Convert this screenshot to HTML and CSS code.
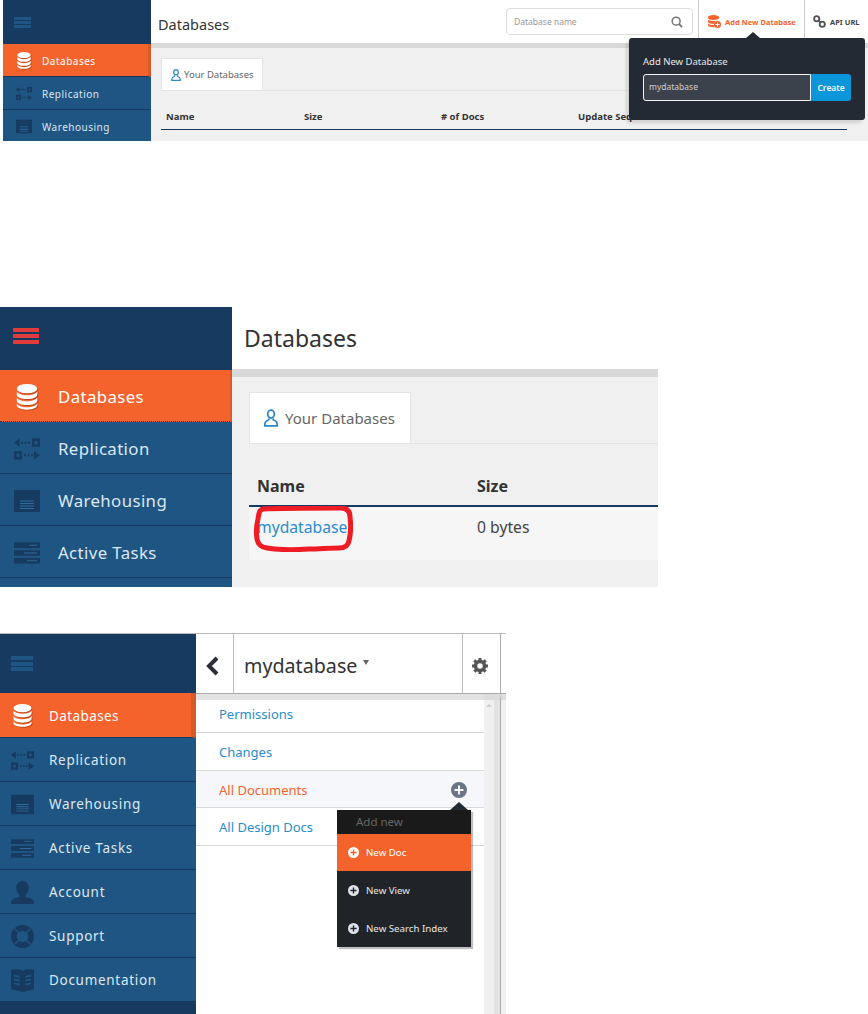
FILE: index.html
```html
<!DOCTYPE html>
<html lang="en">
<head>
<meta charset="utf-8">
<title>Databases</title>
<link rel="stylesheet" href="styles.css">
</head>
<body>
<svg class="defs" width="0" height="0">
  <defs>
    <symbol id="i-db" viewBox="0 0 24 28">
      <ellipse cx="12" cy="5" rx="11" ry="5" fill="currentColor"/>
      <path fill="currentColor" d="M1 8c1.500 2.800 6 4 11 4s9.500-1.200 11-4v3.500c0 2.700-5 4.700-11 4.700S1 14.200 1 11.500zM1 14.500c1.500 2.800 6 4 11 4s9.500-1.200 11-4V18c0 2.700-5 4.700-11 4.700S1 20.700 1 18zM1 21c1.500 2.800 6 4 11 4s9.500-1.200 11-4v2c0 2.700-5 4.700-11 4.700S1 25.700 1 23z"/>
    </symbol>
    <symbol id="i-rep" viewBox="0 0 26 21">
      <path fill="currentColor" d="M0 4.200L5.500 0v8.300zM7 3.200h2v2H7zM10.500 3.200h2v2h-2zM14 3.200h2v2h-2zM18 0h8v8.300h-8zM0 12.700h8V21H0zM10 15.800h2v2h-2zM13.500 15.800h2v2h-2zM17 15.800h2v2h-2zM20 12.700l6 4.200-6 4.100z"/>
      <path fill="#1f5583" d="M20.500 2.500h3v3.300h-3zM2.500 15.200h3v3.300h-3z"/>
    </symbol>
    <symbol id="i-ware" viewBox="0 0 26 22">
      <path fill="currentColor" d="M0 0h26v22H0z"/>
      <path fill="#2f6a9c" d="M6 10.500h14v1H6zM6 13h14v1H6zM6 15.500h14v1H6zM6 18h14v1H6z"/>
    </symbol>
    <symbol id="i-tasks" viewBox="0 0 26 21">
      <path fill="currentColor" d="M0 0h26v5.500H0zM0 7.700h26v5.500H0zM0 15.500h26V21H0z"/>
      <path fill="#2f6a9c" d="M15 2.200h8v1h-8zM10 10h13v1H10zM13 17.700h10v1H13z"/>
    </symbol>
    <symbol id="i-user" viewBox="0 0 24 24">
      <path fill="currentColor" d="M12 0c4 0 6.500 3 6.500 7s-2.300 7-3.500 8v1.500c3 1.200 9 2 9 6V24H0v-1.500c0-4 6-4.800 9-6V15c-1.200-1-3.500-4-3.500-8s2.500-7 6.500-7z"/>
    </symbol>
    <symbol id="i-user-o" viewBox="0 0 16 20">
      <ellipse cx="8" cy="5.500" rx="3.800" ry="4.500" fill="none" stroke="currentColor" stroke-width="2"/>
      <path fill="none" stroke="currentColor" stroke-width="2" d="M5.500 10.500v1.500C3 13 1 14.500 1 17v2h14v-2c0-2.500-2-4-4.500-5v-1.500"/>
    </symbol>
    <symbol id="i-support" viewBox="0 0 24 24">
      <path fill="currentColor" fill-rule="evenodd" d="M12 0a12 12 0 1 1 0 24 12 12 0 0 1 0-24zm0 6a6 6 0 1 0 0 12 6 6 0 0 0 0-12z"/>
      <path fill="none" stroke="#1f5583" stroke-width="1.500" d="M4 4l4.500 4.500M20 4l-4.500 4.500M4 20l4.500-4.500M20 20l-4.500-4.500"/>
    </symbol>
    <symbol id="i-book" viewBox="0 0 24 24">
      <path fill="currentColor" fill-rule="evenodd" d="M0 1c4-1 9-1 12 1 3-2 8-2 12-1v20l-12 3L0 21zM3 6v2l6 1V7zM3 10v2l6 1v-2zM3 14v2l6 1v-2zM21 6l-6 1v2l6-1zM21 10l-6 1v2l6-1zM21 14l-6 1v2l6-1z"/>
    </symbol>
    <symbol id="i-plus" viewBox="0 0 16 16">
      <path fill="currentColor" d="M8 0a8 8 0 1 1 0 16A8 8 0 0 1 8 0zM7 3.500V7H3.500v2H7v3.500h2V9h3.500V7H9V3.500z"/>
    </symbol>
  </defs>
</svg>

<section class="panel panel-one">
  <nav class="side">
    <div class="side-head"><span class="burger"><i></i><i></i><i></i></span></div>
    <a class="side-item active"><svg class="side-icon"><use href="#i-db"/></svg>Databases</a>
    <a class="side-item"><svg class="side-icon"><use href="#i-rep"/></svg>Replication</a>
    <a class="side-item"><svg class="side-icon"><use href="#i-ware"/></svg>Warehousing</a>
  </nav>
  <div class="main">
    <header class="top">
      <h1 class="title">Databases</h1>
      <div class="search"><span>Database name</span>
        <svg class="search-icon" viewBox="0 0 14 14"><circle cx="6" cy="6" r="4.600" fill="none" stroke="currentColor" stroke-width="1.800"/><path d="M9.200 9.200L13 13" stroke="currentColor" stroke-width="2.200"/></svg>
      </div>
      <a class="top-action add">
        <svg class="add-icon" viewBox="0 0 13 13"><path fill="currentColor" d="M0 2c0-1 2.500-2 5.500-2S11 1 11 2v1c0 1-2.500 2-5.500 2S0 4 0 3zM0 4.500C1 5.500 3 6 5.500 6c1 0 2 0 3-.3A3.800 3.800 0 0 0 5.800 9C3 9 1 8.300 0 7.300zM0 8.500c1 1 3 1.500 5.800 1.500.1.800.4 1.500.9 2.200-.4.100-.8.100-1.200.100-3 0-5.500-1-5.500-2z"/><circle cx="9.500" cy="9.500" r="3.500" fill="currentColor"/><path d="M9.500 7.500v4M7.500 9.500h4" stroke="#fff" stroke-width="1"/></svg>
        Add New Database</a>
      <a class="top-action api">
        <svg class="api-icon" viewBox="0 0 14 14"><circle cx="4" cy="4" r="2.800" fill="none" stroke="currentColor" stroke-width="2"/><circle cx="10" cy="10" r="2.800" fill="none" stroke="currentColor" stroke-width="2"/><path d="M5.500 5.500l3 3" stroke="currentColor" stroke-width="2"/></svg>API URL</a>
    </header>
    <div class="band"></div>
    <div class="body">
      <div class="tabs"><div class="tab"><svg class="tab-icon"><use href="#i-user-o"/></svg>Your Databases</div></div>
      <div class="thead">
        <span class="col-a">Name</span><span class="col-b">Size</span><span class="col-c"># of Docs</span><span>Update Seq</span>
      </div>
    </div>
  </div>
  <div class="popover">
    <label class="pop-label">Add New Database</label>
    <div class="pop-row"><span class="pop-input">mydatabase</span><span class="pop-btn">Create</span></div>
  </div>
</section>

<section class="panel panel-two">
  <nav class="side">
    <div class="side-head"><span class="burger"><i></i><i></i><i></i></span></div>
    <a class="side-item active"><svg class="side-icon"><use href="#i-db"/></svg>Databases</a>
    <a class="side-item"><svg class="side-icon"><use href="#i-rep"/></svg>Replication</a>
    <a class="side-item"><svg class="side-icon"><use href="#i-ware"/></svg>Warehousing</a>
    <a class="side-item"><svg class="side-icon"><use href="#i-tasks"/></svg>Active Tasks</a>
    <a class="side-item"></a>
  </nav>
  <div class="main">
    <header class="top"><h1 class="title">Databases</h1></header>
    <div class="band"></div>
    <div class="body">
      <div class="tabs"><div class="tab"><svg class="tab-icon"><use href="#i-user-o"/></svg>Your Databases</div></div>
      <div class="thead"><span class="col-a">Name</span><span>Size</span></div>
      <div class="trow"><a class="col-a link">mydatabase</a><span>0 bytes</span></div>
    </div>
  </div>
  <svg class="ring" viewBox="0 0 100 46"><path fill="none" stroke="#ee1c25" stroke-width="5" stroke-linejoin="round" d="M10 3C30 2 65 2 88 2c6 0 9 3 9 9 1 8 1 16-1 24-1 5-5 7-10 7-10 0-20 1-30 1-15 1-30 1-42-1-6-1-9-3-10-9-1-6-1-12 1-20C6 7 6 4 10 3z"/></svg>
</section>

<section class="panel panel-three">
  <nav class="side">
    <div class="side-head"><span class="burger"><i></i><i></i><i></i></span></div>
    <a class="side-item active"><svg class="side-icon"><use href="#i-db"/></svg>Databases</a>
    <a class="side-item"><svg class="side-icon"><use href="#i-rep"/></svg>Replication</a>
    <a class="side-item"><svg class="side-icon"><use href="#i-ware"/></svg>Warehousing</a>
    <a class="side-item"><svg class="side-icon"><use href="#i-tasks"/></svg>Active Tasks</a>
    <a class="side-item"><svg class="side-icon"><use href="#i-user"/></svg>Account</a>
    <a class="side-item"><svg class="side-icon"><use href="#i-support"/></svg>Support</a>
    <a class="side-item"><svg class="side-icon"><use href="#i-book"/></svg>Documentation</a>
  </nav>
  <div class="main">
    <header class="db-top">
      <span class="back"><svg viewBox="0 0 14 20" class="back-icon"><path d="M11 2L3 10l8 8" fill="none" stroke="currentColor" stroke-width="4"/></svg></span>
      <span class="db-name">mydatabase<i class="caret"></i></span>
      <span class="gear">
        <svg viewBox="0 0 16 16" class="gear-icon"><circle cx="8" cy="8" r="4.500" fill="none" stroke="currentColor" stroke-width="3.500"/><path stroke="currentColor" stroke-width="3" d="M8 0v16M0 8h16M2.300 2.300l11.400 11.400M13.700 2.300L2.300 13.700" stroke-dasharray="3 10"/></svg>
      </span>
    </header>
    <div class="db-wrap">
      <div class="db-list">
        <div class="band"></div>
        <a class="db-link first">Permissions</a>
        <a class="db-link">Changes</a>
        <a class="db-link current">All Documents<svg class="plus"><use href="#i-plus"/></svg></a>
        <a class="db-link">All Design Docs</a>
      </div>
      <div class="scroll"><span class="scroll-up"></span></div>
      <div class="edge"></div>
    </div>
  </div>
  <div class="menu">
    <div class="menu-head">Add new</div>
    <a class="menu-item on"><svg class="menu-icon"><use href="#i-plus"/></svg>New Doc</a>
    <a class="menu-item"><svg class="menu-icon"><use href="#i-plus"/></svg>New View</a>
    <a class="menu-item"><svg class="menu-icon"><use href="#i-plus"/></svg>New Search Index</a>
  </div>
</section>
</body>
</html>
```

FILE: styles.css
```css
* { box-sizing: border-box; }
html, body { margin: 0; padding: 0; background: #fff; }
body { width: 868px; height: 1014px; overflow: hidden; font-family: "Noto Sans", "Open Sans", sans-serif; color: #333; }
.defs { position: absolute; }
.panel { position: relative; display: flex; overflow: visible; }
.side { display: flex; flex-direction: column; background: #173a60; flex: none; overflow: hidden; }
.side-head { display: flex; align-items: center; flex: none; }
.burger { display: flex; flex-direction: column; }
.burger i { display: block; background: #1f5583; }
.side-item { display: flex; align-items: center; flex: none; background: #1f5583; color: #dce8f2; border-bottom: 1px solid #173a60; letter-spacing: .4px; }
.side-item.active { background: #f5632c; color: #fff; border-right-style: solid; border-right-color: #d75a2b; border-bottom-color: #173a60; }
.side-icon { flex: none; color: #173a60; }
.side-item.active .side-icon { color: #fff; filter: drop-shadow(1px 1px 0 rgba(120,50,10,.45)); }
.main { flex: 1; min-width: 0; display: flex; flex-direction: column; }
.top { display: flex; align-items: center; background: #fff; flex: none; }
.title { margin: 0; font-weight: 400; color: #333; flex: 1; }
.band { background: #d9d9d9; flex: none; }
.body { flex: 1; background: #f0f0f0; display: flex; flex-direction: column; }
.tabs { border-bottom: 1px solid #e4e4e4; display: flex; }
.tab { display: flex; align-items: center; background: #fff; color: #666; border: 1px solid #e4e4e4; border-bottom: 0; }
.tab-icon { color: #2b86c5; flex: none; }
.thead { display: flex; font-weight: 700; color: #333; }
.link { color: #2b8ccd; }

/* first panel */
.panel-one { height: 141px; margin-left: 3px; margin-bottom: 166px; width: 865px; }
.panel-one .side { width: 148px; }
.panel-one .side-head { height: 44px; padding-left: 11px; }
.panel-one .burger { gap: 1px; }
.panel-one .burger i { width: 17px; height: 3px; }
.panel-one .side-item { height: 33px; font-size: 10px; letter-spacing: .5px; padding-top: 1px; }
.panel-one .side-icon { width: 16px; height: 17px; margin: 0 10px 0 13px; }
.panel-one .side-item.active { border-right-width: 3px; }
.panel-one .top { height: 43px; padding-left: 7px; }
.panel-one .title { font-size: 14.500px; padding-top: 4px; }
.panel-one .band { height: 5px; }
.panel-one .body { padding: 10px 21px 0 10px; }
.panel-one .tabs { height: 33px; }
.panel-one .tab { width: 102px; font-size: 9.500px; padding-left: 9px; }
.panel-one .tab-icon { width: 10px; height: 12px; margin-right: 3px; }
.panel-one .thead { height: 39px; padding: 19px 0 0 5px; font-size: 9.500px; border-bottom: 1px solid #173a60; }
.panel-one .col-a { width: 138px; }
.panel-one .col-b { width: 137px; }
.panel-one .col-c { width: 137px; }
.search { width: 187px; height: 27px; margin-right: 5px; display: flex; align-items: center; justify-content: space-between; padding: 0 9px 0 7px; border: 1px solid #ddd; border-radius: 4px; font-size: 8.500px; color: #999; }
.search-icon { width: 12px; height: 12px; color: #777; }
.top-action { display: flex; align-items: center; height: 43px; border-left: 1px solid #ccc; flex: none; font-size: 7.500px; font-weight: 700; white-space: nowrap; }
.add { width: 106px; padding-left: 9px; color: #f5632c; }
.add-icon { width: 13px; height: 13px; margin-right: 4px; color: #f5632c; }
.api { width: 64px; padding-left: 8px; color: #444; }
.api-icon { width: 13px; height: 13px; margin-right: 4px; color: #555; }
.popover { position: absolute; left: 626px; top: 38px; width: 236px; height: 82px; background: #242a33; border-radius: 3px; padding: 17px 14px 0; box-shadow: -3px 3px 3px rgba(0,0,0,.12); }
.popover::before { content: ""; position: absolute; left: 117px; top: -6px; border: 7px solid transparent; border-top: 0; border-bottom: 6px solid #242a33; }
.pop-label { display: block; color: #e8e8e8; font-size: 9.500px; line-height: 13px; margin-bottom: 6px; }
.pop-row { display: flex; height: 27px; }
.pop-input { width: 169px; background: #3c424b; border: 1px solid #f4f4f4; border-radius: 3px 0 0 3px; color: #d0d0d0; font-size: 8.500px; padding-left: 5px; line-height: 24px; }
.pop-btn { width: 40px; background: #0a96d8; border-radius: 0 3px 3px 0; color: #f0f8fc; font-size: 8.500px; font-weight: 600; text-align: center; line-height: 27px; }

/* second panel */
.panel-two { height: 280px; width: 658px; margin-bottom: 46px; }
.panel-two .side { width: 232px; }
.panel-two .side-head { height: 63px; padding: 0 0 5px 13px; }
.panel-two .burger { gap: 2px; }
.panel-two .burger i { width: 26px; height: 4px; background: #e23b3b; }
.panel-two .side-item { height: 52px; font-size: 16.800px; padding-top: 2px; }
.panel-two .side-icon { width: 26px; height: 26px; margin: 0 18px 0 14px; }
.panel-two .side-item.active { border-right-width: 2px; border-bottom-style: dotted; }
.panel-two .top { height: 62px; padding: 0 0 1px 12px; }
.panel-two .title { font-size: 23px; }
.panel-two .band { height: 8px; }
.panel-two .body { padding: 15px 0 0 17px; }
.panel-two .tabs { height: 52px; }
.panel-two .tab { width: 162px; font-size: 15px; padding: 0 0 1px 14px; }
.panel-two .tab-icon { width: 14px; height: 20px; margin-right: 7px; }
.panel-two .thead { height: 63px; padding: 31px 0 0 8px; font-size: 16px; border-bottom: 2px solid #173a60; }
.panel-two .trow { display: flex; align-items: center; height: 53px; padding: 0 0 13px 8px; background: #f6f6f6; font-size: 15.700px; color: #444; }
.panel-two .col-a { width: 220px; }
.ring { position: absolute; left: 253px; top: 199px; width: 100px; height: 46px; }

/* third panel */
.panel-three { height: 381px; width: 506px; border-top: 1px solid #bbb; }
.panel-three .side { width: 196px; }
.panel-three .side-head { height: 59px; padding-left: 11px; }
.panel-three .burger { gap: 1.500px; }
.panel-three .burger i { width: 22px; height: 4px; }
.panel-three .side-item { height: 44px; font-size: 13.500px; letter-spacing: .7px; padding-top: 1px; }
.panel-three .side-item.active { height: 45px; border-right-width: 5px; letter-spacing: .4px; }
.panel-three .side-icon { width: 23px; height: 23px; margin: 0 15px 0 11px; }
.db-top { display: flex; align-items: stretch; height: 60px; flex: none; background: #fff; border-bottom: 1px solid #aaa; }
.back { width: 37px; flex: none; display: flex; align-items: center; justify-content: center; color: #2a2f38; padding: 4px 3px 0 0; }
.back-icon { width: 14px; height: 20px; }
.db-name { width: 230px; flex: none; display: flex; align-items: center; border-left: 1px solid #bbb; border-right: 1px solid #bbb; padding: 4px 0 0 10px; font-size: 19.700px; color: #333; }
.caret { margin: 0 0 6px 6px; border: 3.500px solid transparent; border-top: 5px solid #666; border-bottom: 0; }
.gear { width: 38px; flex: none; display: flex; align-items: center; justify-content: center; color: #555; border-right: 1px solid #aaa; padding: 4px 4px 0 0; }
.gear-icon { width: 16px; height: 16px; }
.db-wrap { flex: 1; display: flex; min-height: 0; }
.db-list { width: 288px; flex: none; display: flex; flex-direction: column; }
.db-list .band { height: 6px; background: #e2e2e2; }
.db-link { position: relative; display: flex; align-items: center; justify-content: space-between; height: 38px; padding: 0 17px 0 23px; border-bottom: 1px solid #d8d8d8; color: #2b8ccd; font-size: 13px; flex: none; }
.db-link.first { height: 33px; padding-bottom: 4px; }
.db-link.current { height: 37px; padding-top: 2px; background: #f5f7fa; color: #f5632c; }
.plus { width: 16px; height: 16px; color: #6a7686; }
.scroll { width: 16px; flex: none; background: linear-gradient(90deg, #f0f0f0 0 10px, #e2e2e2 10px); border-top: 6px solid #dcdcdc; padding: 4px 8px 0 2px; }
.scroll-up { display: block; width: 0; margin: 0 auto; border: 3px solid transparent; border-top: 0; border-bottom: 3px solid #ccc; }
.edge { flex: 1; border-left: 1px solid #aaa; background: #f0f0f0; border-top: 6px solid #dcdcdc; }
.menu { position: absolute; left: 337px; top: 176px; width: 134px; background: #202428; box-shadow: 2px 2px 1px rgba(0,0,0,.25); }
.menu::before { content: ""; position: absolute; left: 113px; top: -8px; border: 9px solid transparent; border-top: 0; border-bottom: 8px solid #242a33; }
.menu-head { height: 24px; background: #1a1a1a; color: #666; font-size: 11.500px; line-height: 24px; padding-left: 19px; }
.menu-item { display: flex; align-items: center; height: 38px; color: #e8e8e8; font-size: 9.700px; padding-left: 11px; }
.menu-item.on { background: #f5632c; color: #fff; height: 37px; }
.menu-icon { width: 11px; height: 11px; margin-right: 7px; color: #dfe3e8; flex: none; }
.menu-item.on .menu-icon { color: #fff; }
```
